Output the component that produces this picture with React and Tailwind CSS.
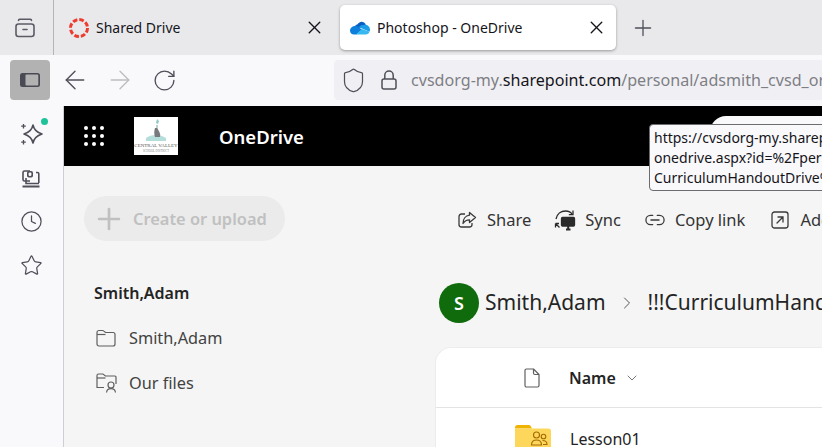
import React from "react";
import { X, Plus, ArrowLeft, ArrowRight, RotateCw, Shield, Clock, Star, ChevronRight, ChevronDown } from "lucide-react";

const FONT = "font-['Noto_Sans','Open_Sans',sans-serif]";

function ArchiveIcon() {
  return (
    <svg width="22" height="22" viewBox="0 0 22 22" fill="none" stroke="#5b5b66" strokeWidth="1.6">
      <rect x="2" y="7" width="18" height="12.5" rx="2.5" />
      <path d="M4.5 3.5c0-.8.5-1.2 1.2-1.2h10.6c.7 0 1.2.4 1.2 1.2" strokeLinecap="round" />
      <path d="M9 12.5h4" strokeLinecap="round" />
    </svg>
  );
}

function SidebarIcon() {
  return (
    <svg width="20" height="16" viewBox="0 0 20 16">
      <rect x="0" y="1" width="20" height="14" rx="2.5" fill="#4a4a55" />
      <rect x="5.5" y="2.6" width="12.8" height="10.8" rx="1" fill="#b2b2b2" />
    </svg>
  );
}

function SharedDriveIcon() {
  return (
    <svg width="22" height="22" viewBox="0 0 22 22" fill="none">
      <circle cx="11" cy="11" r="8.500" stroke="#ee3b2d" strokeWidth="3" strokeDasharray="4.700 1.980" />
    </svg>
  );
}

function OneDriveIcon() {
  return (
    <svg width="20" height="14" viewBox="0 0 20 14">
      <path d="M7.6 3.2C9 .8 12 0 14 1.4c.9.6 1.5 1.4 1.8 2.4L8 8.5 4 6.5c.6-1.6 2-3 3.6-3.3z" fill="#0a5fc4" />
      <path d="M5 5c1.4 0 2.4.5 3.4 1.3L12 8.4 6.5 13.6H4C1.8 13.6 0 12 0 9.8 0 7.2 2.2 5 5 5z" fill="#0f7fdc" />
      <path d="M15 3.8c2.6 0 5 2 5 5 0 .8-.2 1.4-.5 2L12 7.5 8.4 6.3C10 4.6 12.4 3.8 15 3.8z" fill="#1b9de8" />
      <path d="M19.5 10.8c-.6 1.7-2 2.8-3.8 2.8H6L12 8l7.5 2.8z" fill="#37b8f1" />
    </svg>
  );
}

function LockIcon() {
  return (
    <svg width="16" height="20" viewBox="0 0 16 20" fill="none" stroke="#4f4f5a" strokeWidth="1.500" className="shrink-0">
      <rect x="1" y="9" width="14" height="10" rx="2" />
      <path d="M3.800 9V5.200a4.200 4.200 0 0 1 8.400 0V9" />
    </svg>
  );
}

function CopilotIcon() {
  return (
    <svg width="24" height="26" viewBox="0 0 24 26" fill="none" stroke="#4f4f5a" strokeWidth="1.600" strokeLinejoin="round">
      <path d="M14 3c.9 4.800 3.300 7.200 9 9-5.700 1.800-8.100 4.200-9 9-.9-4.800-3.300-7.200-9-9 5.700-1.800 8.100-4.200 9-9z" />
      <path d="M4.500 2v4.500M2.200 4.200h4.600M4.500 18v4.500M2.200 20.200h4.600" strokeWidth="1.300" />
    </svg>
  );
}

function SyncedTabsIcon() {
  return (
    <svg width="20" height="20" viewBox="0 0 20 20" fill="none" stroke="#4f4f5a" strokeWidth="1.6">
      <path d="M9 12H3.500C2.600 12 2 11.400 2 10.500V3.500C2 2.600 2.600 2 3.500 2H9" />
      <rect x="6" y="2" width="6" height="6.500" rx="1.800" fill="#4f4f5a" stroke="none" />
      <rect x="7.600" y="3.500" width="2.800" height="3.500" rx="1" fill="#f9f9fb" stroke="none" />
      <path d="M15 3.500h1.500c.8 0 1.300.5 1.300 1.300V14" />
      <path d="M5 9v5.500h13" />
      <path d="M1.500 17.500h17" strokeWidth="2" />
    </svg>
  );
}

function AppGrid() {
  return (
    <div className="grid grid-cols-3 gap-x-[4px] gap-y-[4px] w-[20px]">
      {Array.from({ length: 9 }).map((_, i) => (
        <span key={i} className="w-[4px] h-[4px] rounded-full bg-white" />
      ))}
    </div>
  );
}

function DistrictLogo() {
  return (
    <div className="w-[44px] h-[38px] bg-white flex flex-col items-center overflow-hidden">
      <svg width="24" height="26" viewBox="0 0 24 26" fill="none">
        <path d="M2 21c5-4 14-4 20 0v3H2z" fill="#b5dedb" />
        <path d="M13 2l2 2-1 3-2-1z" fill="#8fc9c4" />
        <path d="M13 8v6" stroke="#7ca5a5" strokeWidth="1" />
        <path d="M11 11c-1 3-1 6 0 9h5c1-3-1-6-3-9z" fill="#77797c" />
      </svg>
      <span className="font-['Liberation_Serif',serif] text-[5px] leading-[6px] text-[#555] whitespace-nowrap">CENTRAL VALLEY</span>
      <span className="font-['Liberation_Serif',serif] text-[3px] leading-[4px] text-[#888] whitespace-nowrap">SCHOOL DISTRICT</span>
    </div>
  );
}

function ShareIcon() {
  return (
    <svg width="20" height="20" viewBox="0 0 20 20" fill="none" stroke="#3a3a3a" strokeWidth="1.300" strokeLinejoin="round">
      <path d="M8 4H4.500C3.100 4 2 5.100 2 6.500v8C2 15.900 3.100 17 4.500 17h8c1.400 0 2.500-1.100 2.500-2.500V13" />
      <path d="M12.500 2.500L18.500 7.500 12.500 12.500V9.800C9.500 9.800 7.500 11 6 13.500 6 9 8.500 5.600 12.500 5.200z" />
    </svg>
  );
}

function SyncIcon() {
  return (
    <svg width="22" height="22" viewBox="0 0 22 22" fill="none" stroke="#2b2b2b" strokeWidth="1.300">
      <path d="M2 10C3 5 7 2 11.500 2c3 0 5.500 1.200 7 3.500" />
      <path d="M19 1.500v4.200h-4.200" />
      <path d="M1.500 14.500l3.500 0M1.500 14.500v4M1.500 14.500l4 4" />
      <rect x="7.500" y="8.500" width="13" height="8.500" rx="1" fill="#2b2b2b" />
      <path d="M12 20.500h4.500M14.200 17v3.500" strokeWidth="2" />
    </svg>
  );
}

function LinkIcon() {
  return (
    <svg width="20" height="12" viewBox="0 0 22 12" fill="none" stroke="#3a3a3a" strokeWidth="1.400" strokeLinecap="round">
      <path d="M8.500 1H6a5 5 0 0 0 0 10h2.500M13.500 1H16a5 5 0 0 1 0 10h-2.500M6.500 6h9" />
    </svg>
  );
}

function OpenBoxIcon() {
  return (
    <svg width="18" height="18" viewBox="0 0 18 18" fill="none" stroke="#3a3a3a" strokeWidth="1.300" strokeLinecap="round">
      <rect x="1" y="1" width="16" height="16" rx="2.500" />
      <path d="M6 12l6-6M7 6h5v5" />
    </svg>
  );
}

function FolderIcon() {
  return (
    <svg width="20" height="18" viewBox="0 0 20 18" fill="none" stroke="#5f5f5f" strokeWidth="1.200">
      <path d="M1 3.500C1 2.400 1.800 1.500 3 1.500h3.500c.6 0 1 .2 1.400.6L9.500 3.500H17c1.100 0 2 .9 2 2V15c0 1.100-.9 2-2 2H3c-1.200 0-2-.9-2-2z" />
      <path d="M1 5.500h8.500" />
    </svg>
  );
}

function SharedFolderIcon() {
  return (
    <svg width="22" height="20" viewBox="0 0 22 20" fill="none" stroke="#5f5f5f" strokeWidth="1.200">
      <path d="M8 14.500H1V2.500C1 1.700 1.600 1 2.500 1h4c.5 0 1 .2 1.300.6L9.300 3H19c.6 0 1 .4 1 1v7" />
      <path d="M1 5h8.500" />
      <circle cx="15" cy="12" r="3" />
      <path d="M10.500 19.500c.3-2.300 2-3.800 4.500-3.800s4.200 1.500 4.500 3.800" />
    </svg>
  );
}

function FileIcon() {
  return (
    <svg width="16" height="20" viewBox="0 0 16 20" fill="none" stroke="#5f5f5f" strokeWidth="1.200" strokeLinejoin="round">
      <path d="M1 2.500C1 1.600 1.600 1 2.500 1H9.500L15 6.500v11c0 .9-.6 1.500-1.500 1.500h-11C1.600 19 1 18.400 1 17.500z" />
      <path d="M9.500 1v4c0 .9.600 1.500 1.500 1.500h4" />
    </svg>
  );
}

function TeamFolderIcon() {
  return (
    <svg width="36" height="22" viewBox="0 0 36 22" fill="none">
      <path d="M0 2.500C0 1.100 1 0 2.500 0h11c1 0 1.800.5 2.300 1.300L17 3.500H0z" fill="#f0b400" />
      <path d="M0 3.500h33.500c1.400 0 2.500 1.100 2.500 2.500V22H0z" fill="#fdd75c" />
      <circle cx="21.500" cy="10" r="3" stroke="#a66a00" strokeWidth="1.100" />
      <circle cx="28.500" cy="11.500" r="2.300" stroke="#a66a00" strokeWidth="1.100" />
      <path d="M16.500 20c0-3.500 2-5 5-5s5 1.500 5 5z" stroke="#a66a00" strokeWidth="1.100" />
      <path d="M27.500 15.500c3 0 4.500 1 4.500 4h-4" stroke="#a66a00" strokeWidth="1.100" />
    </svg>
  );
}

function Tabs() {
  return (
    <div className="h-[55px] shrink-0 flex bg-[#e9e9ec] text-[#15141a]">
      <div className="w-[54px] flex items-center justify-center border-r border-[#b4b4b8] pr-[4px]">
        <ArchiveIcon />
      </div>
      <div className="w-[286px] flex items-center pl-[14px] pr-[15px] gap-[6px]">
        <SharedDriveIcon />
        <span className="flex-1 text-[14px] whitespace-nowrap">Shared Drive</span>
        <X size={21} strokeWidth={1.600} />
      </div>
      <div className="w-[276px] h-[45px] mt-[5px] flex items-center pl-[10px] pr-[9px] gap-[7px] bg-white rounded-[5px] shadow-[0_1px_3px_rgba(0,0,0,0.35)]">
        <OneDriveIcon />
        <span className="flex-1 text-[14px] whitespace-nowrap">Photoshop - OneDrive</span>
        <X size={21} strokeWidth={1.600} />
      </div>
      <div className="ml-[14px] flex items-center">
        <Plus size={26} strokeWidth={1.200} className="text-[#4f4f5a]" />
      </div>
    </div>
  );
}

function Toolbar() {
  return (
    <div className="h-[51px] shrink-0 flex items-center bg-[#f9f9fb] pl-[10px] pb-[1px]">
      <div className="w-[40px] h-[40px] shrink-0 rounded-[4px] bg-[#b2b2b2] flex items-center justify-center">
        <SidebarIcon />
      </div>
      <ArrowLeft size={30} strokeWidth={1.100} className="shrink-0 ml-[10px] text-[#4f4f5a]" />
      <ArrowRight size={30} strokeWidth={1.100} className="shrink-0 ml-[15px] text-[#bdbdc2]" />
      <RotateCw size={25} strokeWidth={1.300} className="shrink-0 ml-[17px] text-[#4f4f5a]" />
      <div className="ml-[157px] flex-1 min-w-0 h-[40px] rounded-l-[4px] bg-[#f0f0f4] flex items-center pl-[6px] overflow-hidden">
        <Shield size={27} strokeWidth={1.100} className="shrink-0 text-[#4f4f5a]" />
        <div className="ml-[14px]"><LockIcon /></div>
        <span className="ml-[14px] text-[16.100px] text-[#7e7e85] whitespace-nowrap">
          cvsdorg-my.<span className="text-[#15141a]">sharepoint.com</span>/personal/adsmith_cvsd_org
        </span>
      </div>
    </div>
  );
}

function SideIcons() {
  return (
    <div className="w-[64px] shrink-0 bg-[#f9f9fb] border-r border-[#cfcfd3] flex flex-col items-center pr-[1px]">
      <div className="relative h-[26px] mt-[16px]">
        <CopilotIcon />
        <span className="absolute left-[22px] top-[-4px] w-[7px] h-[7px] rounded-full bg-[#1fc39a]" />
      </div>
      <div className="mt-[21px] h-[20px]"><SyncedTabsIcon /></div>
      <Clock size={23} strokeWidth={1.300} className="mt-[21px] text-[#4f4f5a]" />
      <Star size={23} strokeWidth={1.300} className="mt-[21px] text-[#4f4f5a]" />
    </div>
  );
}

function Action({ icon, label, className }) {
  return (
    <div className={`flex items-center text-[16.500px] text-[#333] whitespace-nowrap ${className}`}>
      {icon}
      <span>{label}</span>
    </div>
  );
}

function Main() {
  return (
    <div className="flex-1 min-w-0 flex flex-col bg-[#f5f5f5]">
      <div className="h-[60px] shrink-0 bg-black flex items-center pl-[20px] relative">
        <AppGrid />
        <div className="ml-[30px]"><DistrictLogo /></div>
        <span className="ml-[41px] mt-[1px] text-[18.500px] font-semibold text-white">OneDrive</span>
        <div className="absolute left-[646px] top-[10px] w-[200px] h-[40px] rounded-t-[16px] bg-[#f9f9fb]" />
      </div>
      <div className="flex-1 min-h-0 flex">
        <div className="w-[371px] shrink-0 pl-[20px]">
          <div className="mt-[30px] w-[201px] h-[45px] rounded-full bg-[#ebebeb] flex items-center pl-[8px] gap-[7px] text-[#c0c0c0]">
            <Plus size={34} strokeWidth={1.900} className="shrink-0" />
            <span className="mt-[1px] text-[16.400px] font-semibold whitespace-nowrap">Create or upload</span>
          </div>
          <div className="mt-[40px] ml-[10px] h-[24px] leading-[24px] text-[16px] font-semibold text-[#242424]">Smith,Adam</div>
          <div className="mt-[21px] ml-[12px] h-[24px] flex items-center gap-[13px] text-[16.300px] text-[#424242]">
            <FolderIcon />
            <span>Smith,Adam</span>
          </div>
          <div className="mt-[21px] ml-[12px] h-[24px] flex items-center gap-[11px] text-[16.300px] text-[#424242]">
            <SharedFolderIcon />
            <span>Our files</span>
          </div>
        </div>
        <div className="flex-1 min-w-0 overflow-hidden">
          <div className="mt-[34px] flex items-center h-[40px] pl-[22px]">
            <Action icon={<ShareIcon />} label="Share" className="gap-[10px]" />
            <Action icon={<SyncIcon />} label="Sync" className="ml-[23px] gap-[9px]" />
            <Action icon={<LinkIcon />} label="Copy link" className="ml-[24px] gap-[10px]" />
            <Action icon={<OpenBoxIcon />} label="Add shortcut" className="ml-[26px] gap-[11px]" />
          </div>
          <div className="mt-[43px] h-[40px] ml-[4px] flex items-center whitespace-nowrap text-[21px] text-[#242424]">
            <span className="w-[40px] h-[40px] shrink-0 rounded-full bg-[#0f6b0c] flex items-center justify-center text-white text-[18px] font-semibold">S</span>
            <span className="ml-[6px]">Smith,Adam</span>
            <ChevronRight size={20} strokeWidth={1.200} className="ml-[11px] shrink-0 text-[#555]" />
            <span className="ml-[11px]">!!!CurriculumHandoutDrive</span>
          </div>
          <div className="mt-[24px] h-[100px] w-[500px] bg-white rounded-tl-[16px] border-t border-l border-[#ececec]">
            <div className="h-[60px] flex items-center pl-[88px] border-b border-[#e3e3e3]">
              <FileIcon />
              <span className="ml-[29px] mt-[1px] text-[16px] font-semibold text-[#242424]">Name</span>
              <ChevronDown size={16} strokeWidth={1.200} className="ml-[8px] text-[#555]" />
            </div>
            <div className="flex items-start pl-[79px] pt-[17px]">
              <TeamFolderIcon />
              <span className="ml-[19px] mt-[2px] text-[16px] text-[#242424] leading-[24px]">Lesson01</span>
            </div>
          </div>
        </div>
      </div>
    </div>
  );
}

export default function App() {
  return (
    <div className={`relative w-[822px] h-[447px] overflow-hidden flex flex-col bg-[#f9f9fb] ${FONT}`}>
      <Tabs />
      <Toolbar />
      <div className="flex-1 min-h-0 flex">
        <SideIcons />
        <Main />
      </div>
      <div className="absolute left-[649px] top-[124px] w-[220px] h-[67px] px-[4px] pt-[3px] bg-[#f9f9fb] border border-[#6b6b70] rounded-[4px] text-[14px] leading-[20px] text-[#15141a] whitespace-nowrap overflow-hidden">
        <div>https://cvsdorg-my.sharepoint.com/</div>
        <div>onedrive.aspx?id=%2Fpersonal</div>
        <div>CurriculumHandoutDrive%2F</div>
      </div>
    </div>
  );
}
